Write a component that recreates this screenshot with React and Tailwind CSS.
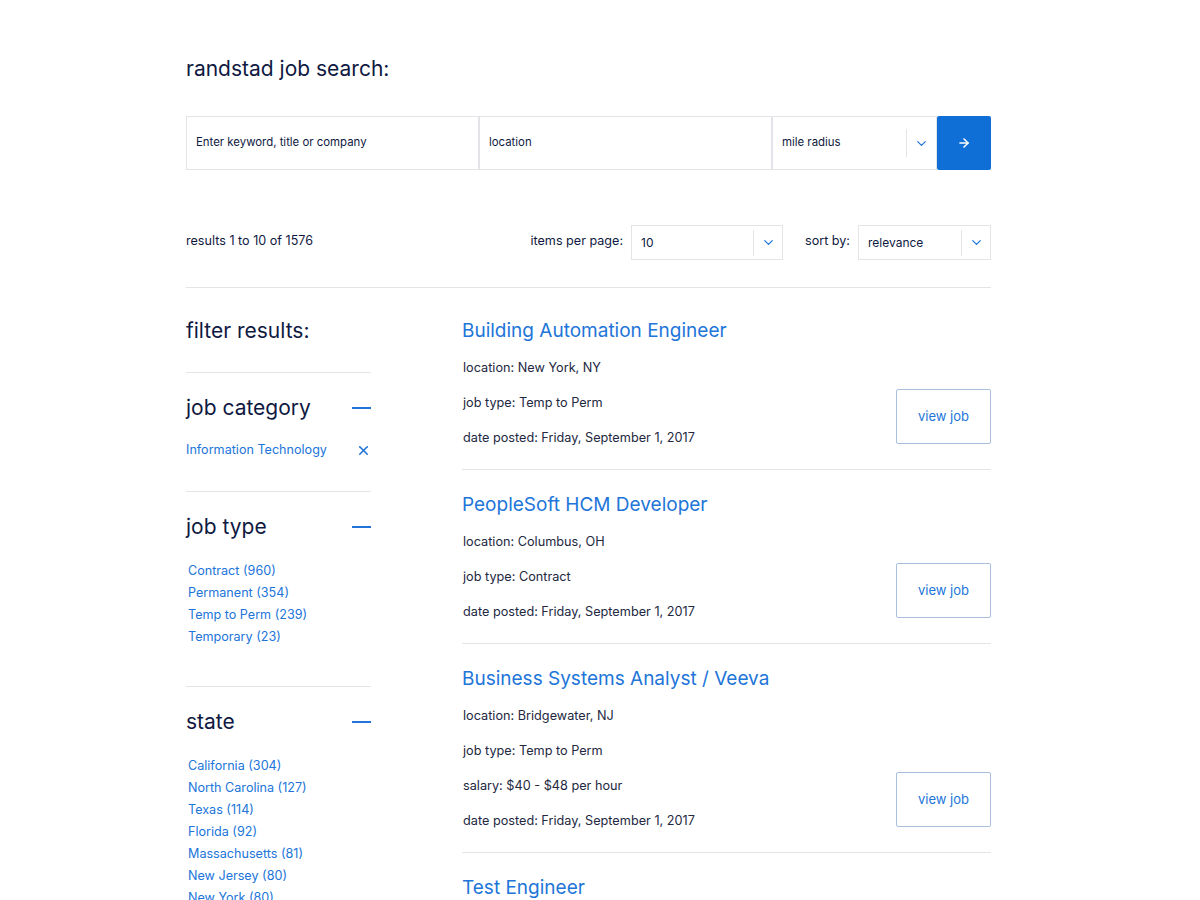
import { ArrowRight, ChevronDown, X } from 'lucide-react';

const jobs = [
  {
    title: 'Building Automation Engineer',
    details: ['location: New York, NY', 'job type: Temp to Perm', 'date posted: Friday, September 1, 2017'],
  },
  {
    title: 'PeopleSoft HCM Developer',
    details: ['location: Columbus, OH', 'job type: Contract', 'date posted: Friday, September 1, 2017'],
  },
  {
    title: 'Business Systems Analyst / Veeva',
    details: [
      'location: Bridgewater, NJ',
      'job type: Temp to Perm',
      'salary: $40 - $48 per hour',
      'date posted: Friday, September 1, 2017',
    ],
  },
  {
    title: 'Test Engineer',
    details: ['location: Alexandria, VA', 'job type: Contract', 'date posted: Friday, September 1, 2017'],
  },
];

const jobTypes = ['Contract (960)', 'Permanent (354)', 'Temp to Perm (239)', 'Temporary (23)'];
const states = [
  'California (304)',
  'North Carolina (127)',
  'Texas (114)',
  'Florida (92)',
  'Massachusetts (81)',
  'New Jersey (80)',
  'New York (80)',
  'Illinois (64)',
];

const Minus = () => <div className="w-[19px] h-[2px] bg-[#2175d9]" />;

const SelectBox = ({ value, width }) => (
  <div className={`flex items-center h-[35px] border border-[#e3e4e8] bg-white ${width}`}>
    <span className="flex-1 pl-[9px] text-[12px] text-[#0f1941]">{value}</span>
    <div className="w-px h-[26px] bg-[#e3e4e8]" />
    <div className="w-[28px] flex justify-center">
      <ChevronDown className="w-[15px] h-[15px] text-[#2175d9]" strokeWidth={2} />
    </div>
  </div>
);

const FilterSection = ({ title, children, pad }) => (
  <div className={`border-t border-[#e3e4e8] pt-[21px] ${pad}`}>
    <div className="flex items-center justify-between h-[28px]">
      <h3 className="text-[21px] leading-[28px]">{title}</h3>
      <Minus />
    </div>
    {children}
  </div>
);

const App = () => {
  return (
    <div className="min-h-screen bg-white text-[#0f1941] font-['Inter',sans-serif]">
      <div className="w-[805px] ml-[186px] pt-[56px]">
        {/* Header */}
        <h1 className="text-[21px] leading-[26px]">randstad job search:</h1>

        {/* Search bar */}
        <div className="flex h-[54px] mt-[34px]">
          <div className="w-[293px] border border-[#e3e4e8] flex items-center pl-[9px] text-[11.4px]">
            Enter keyword, title or company
          </div>
          <div className="w-[293px] border border-[#e3e4e8] flex items-center pl-[9px] text-[11.4px]">
            location
          </div>
          <div className="w-[165px] border border-[#e3e4e8] flex items-center text-[11.4px]">
            <span className="flex-1 pl-[9px]">mile radius</span>
            <div className="w-px h-[28px] bg-[#e3e4e8]" />
            <div className="w-[29px] flex justify-center">
              <ChevronDown className="w-[15px] h-[15px] text-[#2175d9]" strokeWidth={2} />
            </div>
          </div>
          <button className="w-[54px] bg-[#0f6fd6] rounded-[2px] flex items-center justify-center">
            <ArrowRight className="w-[14px] h-[14px] text-white" strokeWidth={2.6} />
          </button>
        </div>

        {/* Results bar */}
        <div className="flex items-center justify-between mt-[55px] pb-[27px] border-b border-[#e3e4e8]">
          <span className="text-[12.6px] -mt-[3px]">results 1 to 10 of 1576</span>
          <div className="flex items-center">
            <span className="text-[12.6px] mr-[8px] -mt-[3px]">items per page:</span>
            <SelectBox value="10" width="w-[152px]" />
            <span className="text-[12.6px] ml-[22px] mr-[8px] -mt-[3px]">sort by:</span>
            <SelectBox value="relevance" width="w-[133px]" />
          </div>
        </div>

        {/* Main */}
        <div className="flex gap-[91px] pt-[29px]">
          {/* Sidebar */}
          <aside className="w-[185px] shrink-0">
            <h2 className="text-[21px] leading-[28px] mb-[27px]">filter results:</h2>

            <FilterSection title="job category" pad="pb-[30px]">
              <div className="flex items-center justify-between mt-[17px] h-[22px]">
                <span className="text-[12.6px] text-[#2175d9]">Information Technology</span>
                <X className="w-[15px] h-[15px] text-[#2175d9]" strokeWidth={2.6} />
              </div>
            </FilterSection>

            <FilterSection title="job type" pad="pb-[38px]">
              <ul className="mt-[19px] pl-[2px]">
                {jobTypes.map((t) => (
                  <li key={t} className="text-[12.6px] leading-[22px] text-[#2175d9]">
                    {t}
                  </li>
                ))}
              </ul>
            </FilterSection>

            <FilterSection title="state" pad="pb-[30px]">
              <ul className="mt-[19px] pl-[2px]">
                {states.map((t) => (
                  <li key={t} className="text-[12.6px] leading-[22px] text-[#2175d9]">
                    {t}
                  </li>
                ))}
              </ul>
            </FilterSection>
          </aside>

          {/* Job list */}
          <main className="w-[529px]">
            {jobs.map((job, i) => (
              <div
                key={job.title}
                className={`border-b border-[#e3e4e8] pb-[14px] ${i === 0 ? '' : 'pt-[21px]'}`}
              >
                <h2 className="text-[19px] leading-[28px] text-[#2175d9]">{job.title}</h2>
                <div className="flex items-end justify-between mt-[5px]">
                  <div className="pl-[1px]">
                    {job.details.map((d) => (
                      <p key={d} className="text-[12.7px] leading-[35px] text-[#23283f]">
                        {d}
                      </p>
                    ))}
                  </div>
                  <button className="w-[95px] h-[55px] mb-[11px] border border-[#a8bfe0] rounded-[2px] text-[13px] text-[#2175d9] bg-white">
                    view job
                  </button>
                </div>
              </div>
            ))}
          </main>
        </div>
      </div>
    </div>
  );
};

export default App;
